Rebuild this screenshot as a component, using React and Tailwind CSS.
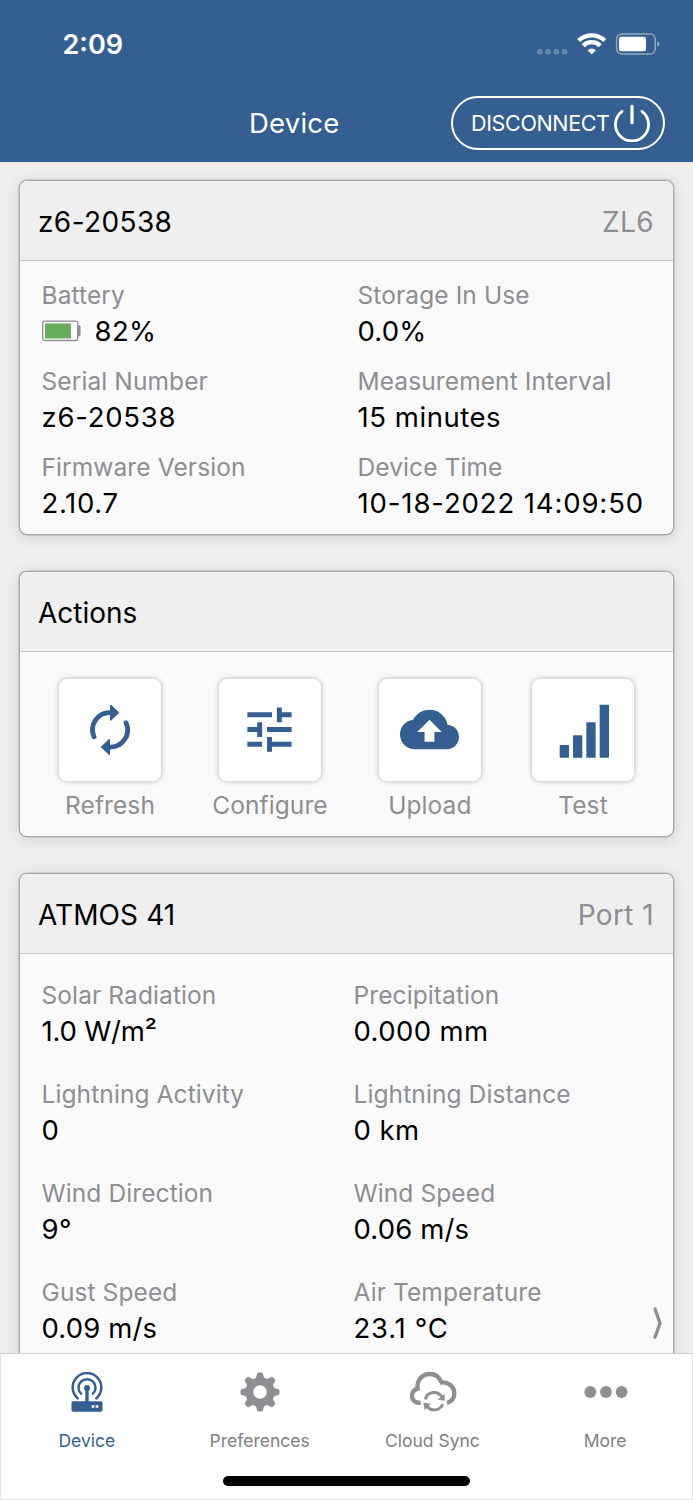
import { MdTune, MdBackup } from "react-icons/md"

const deviceInfo = [
  { label: "Battery", value: "82%", battery: true, spacing: "tracking-[0.4px]" },
  { label: "Storage In Use", value: "0.0%", spacing: "tracking-[0.2px]" },
  { label: "Serial Number", value: "z6-20538", spacing: "tracking-[0.75px]" },
  { label: "Measurement Interval", value: "15 minutes", spacing: "tracking-[0.55px]" },
  { label: "Firmware Version", value: "2.10.7", spacing: "tracking-[0.65px]" },
  { label: "Device Time", value: "10-18-2022 14:09:50", spacing: "tracking-[0.88px]" },
]

const readings = [
  { label: "Solar Radiation", value: "1.0 W/m²", spacing: "tracking-[-0.2px]" },
  { label: "Precipitation", value: "0.000 mm", spacing: "tracking-[0.4px]" },
  { label: "Lightning Activity", value: "0" },
  { label: "Lightning Distance", value: "0 km", spacing: "tracking-[0.4px]" },
  { label: "Wind Direction", value: "9°", spacing: "tracking-[0.4px]" },
  { label: "Wind Speed", value: "0.06 m/s", spacing: "tracking-[0.15px]" },
  { label: "Gust Speed", value: "0.09 m/s", spacing: "tracking-[0.15px]" },
  { label: "Air Temperature", value: "23.1 °C", spacing: "tracking-[0.75px]" },
]

function RefreshIcon() {
  return (
    <svg viewBox="0 0 306 306" className="size-[102px]" fill="none" stroke="currentColor">
      <path d="M105 173A51.5 51.5 0 0 1 156 101M201 131A51.5 51.5 0 0 1 150 204" strokeWidth="14.500" strokeLinecap="round" />
      <path d="M155 79L178 101L155 123ZM151 182L128 204L151 226Z" fill="currentColor" strokeWidth="4" strokeLinejoin="round" />
    </svg>
  )
}

function SignalIcon() {
  return (
    <svg viewBox="0 0 306 306" className="size-[102px]" fill="currentColor">
      <rect x="83" y="198" width="28" height="38" rx="2" />
      <rect x="123" y="169" width="28" height="67" rx="2" />
      <rect x="163" y="130" width="28" height="106" rx="2" />
      <rect x="203" y="77" width="28" height="159" rx="2" />
    </svg>
  )
}

function RouterIcon() {
  return (
    <svg viewBox="0 0 120 120" className="size-10" fill="none" stroke="currentColor">
      <g strokeWidth="7.500" strokeLinecap="round">
        <path d="M32 79A43 43 0 1 1 88 79" />
        <path d="M42 65A25.5 25.5 0 1 1 78 65" />
      </g>
      <path d="M60 47V92" strokeWidth="10" />
      <circle cx="60" cy="48" r="9" fill="currentColor" stroke="none" />
      <rect x="13.500" y="88" width="93" height="31" rx="5" fill="currentColor" stroke="none" />
      <path d="M74 103.500h8M86 103.500h8" stroke="white" strokeWidth="7" />
    </svg>
  )
}

function GearIcon() {
  return (
    <svg viewBox="-60 -60 120 120" className="size-10">
      <circle r="32" fill="none" stroke="currentColor" strokeWidth="23" />
      {[0, 45, 90, 135, 180, 225, 270, 315].map((angle) => (
        <path
          key={angle}
          transform={`rotate(${angle})`}
          fill="currentColor"
          d="M-17.500 -38.500C-12 -42 -10.500 -47 -9 -54Q-8 -58.500 -5 -58.500H5Q8 -58.500 9 -54C10.500 -47 12 -42 17.500 -38.500Z"
        />
      ))}
    </svg>
  )
}

function CloudSyncIcon() {
  return (
    <svg viewBox="0 0 144 124" className="h-[41.300px] w-12" fill="none" stroke="currentColor">
      <path
        d="M35 95C18 97 9 87 9 74C9 63 16 56 26 53C22 27 40 9 63 9C79 9 91 18 97 34M92 35C116 30 136 46 136 67C136 81 128 92 114 96"
        strokeWidth="13"
      />
      <path d="M49 85A27 27 0 0 1 98 77M101 100A27 27 0 0 1 53 104" strokeWidth="9" />
      <path d="M107 68V89L86 86ZM43 95L65 98L47 117Z" fill="currentColor" stroke="none" />
    </svg>
  )
}

function MoreIcon() {
  return (
    <svg viewBox="0 0 44 12" className="h-3 w-11" fill="currentColor">
      <circle cx="6.300" cy="6" r="5.900" />
      <circle cx="22" cy="6" r="5.900" />
      <circle cx="37.600" cy="6" r="5.900" />
    </svg>
  )
}

function StatusIcons() {
  return (
    <svg viewBox="0 0 126 24" className="h-6 w-[126px]" fill="white">
      <g opacity="0.250">
        <rect x="2" y="16" width="5.500" height="5.500" rx="1.500" />
        <rect x="10.300" y="16" width="5.500" height="5.500" rx="1.500" />
        <rect x="18.600" y="16" width="5.500" height="5.500" rx="1.500" />
        <rect x="26.900" y="16" width="5.500" height="5.500" rx="1.500" />
      </g>
      <g fill="none" stroke="white" strokeWidth="4.200">
        <path d="M43.700 7.600A18.800 18.800 0 0 1 69.700 7.600" />
        <path d="M48.200 12.700A12 12 0 0 1 65.200 12.700" />
      </g>
      <path d="M56.700 21.500L52.600 17.200A6 6 0 0 1 60.800 17.200Z" />
      <rect x="81.600" y="1.100" width="38.600" height="19.800" rx="5" fill="none" stroke="white" strokeWidth="1.500" opacity="0.450" />
      <rect x="84" y="3.700" width="27" height="14.600" rx="2.500" />
      <path d="M122.300 8.200Q124.300 9 124.300 11T122.300 13.800Z" opacity="0.500" />
    </svg>
  )
}

function PowerIcon() {
  return (
    <svg viewBox="0 0 108 114" className="h-[38px] w-9" fill="none" stroke="white" strokeLinecap="round">
      <path d="M24 22A49.500 49.500 0 1 0 84 22" strokeWidth="8.500" />
      <path d="M54 7V56" strokeWidth="9.500" />
    </svg>
  )
}

function BatteryIcon() {
  return (
    <svg viewBox="0 0 39 22" className="h-[22px] w-[39px]">
      <rect x="0.700" y="1.200" width="35" height="19.300" rx="2" fill="white" stroke="#8e8e93" strokeWidth="1.300" />
      <rect x="3" y="3.500" width="26" height="15" fill="#68ad5c" />
      <path d="M36 5.500h1q1.300 0 1.300 1.300v8q0 1.300-1.300 1.300h-1z" fill="#8e8e93" stroke="#8e8e93" strokeWidth="0.500" />
    </svg>
  )
}

function Card({ title, aside, className = "", titleClass = "", children }) {
  return (
    <section className={`relative rounded-lg border border-[#a9aaac] bg-[#fafafa] shadow-[0_0_0_0.5px_#b4b4b4,0_2px_14px_rgba(0,0,0,0.12)] ${className}`}>
      <header className="flex h-20 items-center justify-between rounded-t-[7px] border-b border-[#c8c8ca] bg-[#efefef] pt-[2px] pr-[19px] pl-[18px] text-[28px]">
        <h2 className={titleClass}>{title}</h2>
        {aside && <span className="tracking-[0.4px] text-[#8e8e93]">{aside}</span>}
      </header>
      {children}
    </section>
  )
}

function Field({ label, value, battery, spacing = "" }) {
  return (
    <div className="whitespace-nowrap leading-9">
      <div className="text-[24.500px] tracking-[0.1px] text-[#8e8e93]">{label}</div>
      <div className={`flex items-center text-[27.500px] ${spacing}`}>
        {battery && <span className="mr-[14px]"><BatteryIcon /></span>}
        {value}
      </div>
    </div>
  )
}

function ActionButton({ label, children }) {
  return (
    <div className="flex flex-col items-center">
      <button className="flex size-[102px] items-center justify-center rounded-lg bg-white text-[#355f91] shadow-[0_0_4px_1px_rgba(0,0,0,0.22)]">
        {children}
      </button>
      <span className="mt-[6px] text-[24.500px] leading-9 tracking-[0.1px] text-[#8e8e93]">{label}</span>
    </div>
  )
}

function Tab({ label, active, children }) {
  return (
    <button className={`flex flex-1 flex-col items-center ${active ? "text-[#355f91]" : "text-[#8e8e93]"}`}>
      <span className="flex h-[75px] items-center justify-center">{children}</span>
      <span className={`pr-px text-[17.500px] leading-6 ${active ? "" : "text-[#808084]"}`}>{label}</span>
    </button>
  )
}

function App() {
  return (
    <div className="flex h-[1500px] w-[693px] flex-col overflow-hidden bg-[#eeeeee] font-['Inter',sans-serif] text-black">
      <header className="flex h-[162px] shrink-0 flex-col bg-[#355f91] text-white">
        <div className="flex h-[88px] items-center justify-between pt-[2px] pr-[32px] pl-[62.500px]">
          <span className="text-[27px] font-semibold">2:09</span>
          <StatusIcons />
        </div>
        <div className="flex items-center pt-2 pr-[28px] pl-[249px]">
          <h1 className="flex-1 pt-px text-[27.500px] tracking-[0.2px]">Device</h1>
          <button className="flex h-[54px] w-[214px] items-center rounded-full border-2 border-white pl-[18px] text-[21.500px]">
            <span className="w-[143px] text-left tracking-[-0.35px]">DISCONNECT</span>
            <PowerIcon />
          </button>
        </div>
      </header>

      <main className="flex min-h-0 flex-1 flex-col gap-[36px] overflow-hidden px-[19px] pt-[18px]">
        <Card title="z6-20538" aside="ZL6" titleClass="tracking-[0.4px]" className="h-[355px] shrink-0">
          <div className="grid grid-cols-[316px_1fr] gap-y-[14px] pt-4 pl-[21.500px]">
            {deviceInfo.map((field) => (
              <Field key={field.label} {...field} />
            ))}
          </div>
        </Card>

        <Card title="Actions" titleClass="tracking-[0px]" className="h-[266px] shrink-0">
          <div className="flex justify-between pt-[26.500px] pr-[39px] pl-[39px]">
            <ActionButton label="Refresh"><RefreshIcon /></ActionButton>
            <ActionButton label="Configure"><MdTune size={59} /></ActionButton>
            <ActionButton label="Upload"><MdBackup size={59} /></ActionButton>
            <ActionButton label="Test"><SignalIcon /></ActionButton>
          </div>
        </Card>

        <Card title="ATMOS 41" aside="Port 1" titleClass="tracking-[0.1px]" className="h-[600px] shrink-0">
          <div className="grid grid-cols-[312px_1fr] gap-y-[27px] pt-[23px] pl-[21.500px]">
            {readings.map((field) => (
              <Field key={field.label} {...field} />
            ))}
          </div>
          <svg viewBox="0 0 12 34" className="absolute top-[432px] right-[9px] h-[34px] w-3" fill="none" stroke="#8e8e93" strokeWidth="3.300" strokeLinecap="round">
            <path d="M3 3L8 17.300L3 31.300" />
          </svg>
        </Card>
      </main>

      <footer className="flex h-[147px] shrink-0 flex-col items-center border border-[#e4e4e4] border-t-[#cfcfcf] bg-white">
        <nav className="flex h-[122px] w-full">
          <Tab label="Device" active><RouterIcon /></Tab>
          <Tab label="Preferences"><GearIcon /></Tab>
          <Tab label="Cloud Sync"><CloudSyncIcon /></Tab>
          <Tab label="More"><MoreIcon /></Tab>
        </nav>
        <div className="h-[9.500px] w-[247px] rounded-full bg-black" />
      </footer>
    </div>
  )
}

export default App;
